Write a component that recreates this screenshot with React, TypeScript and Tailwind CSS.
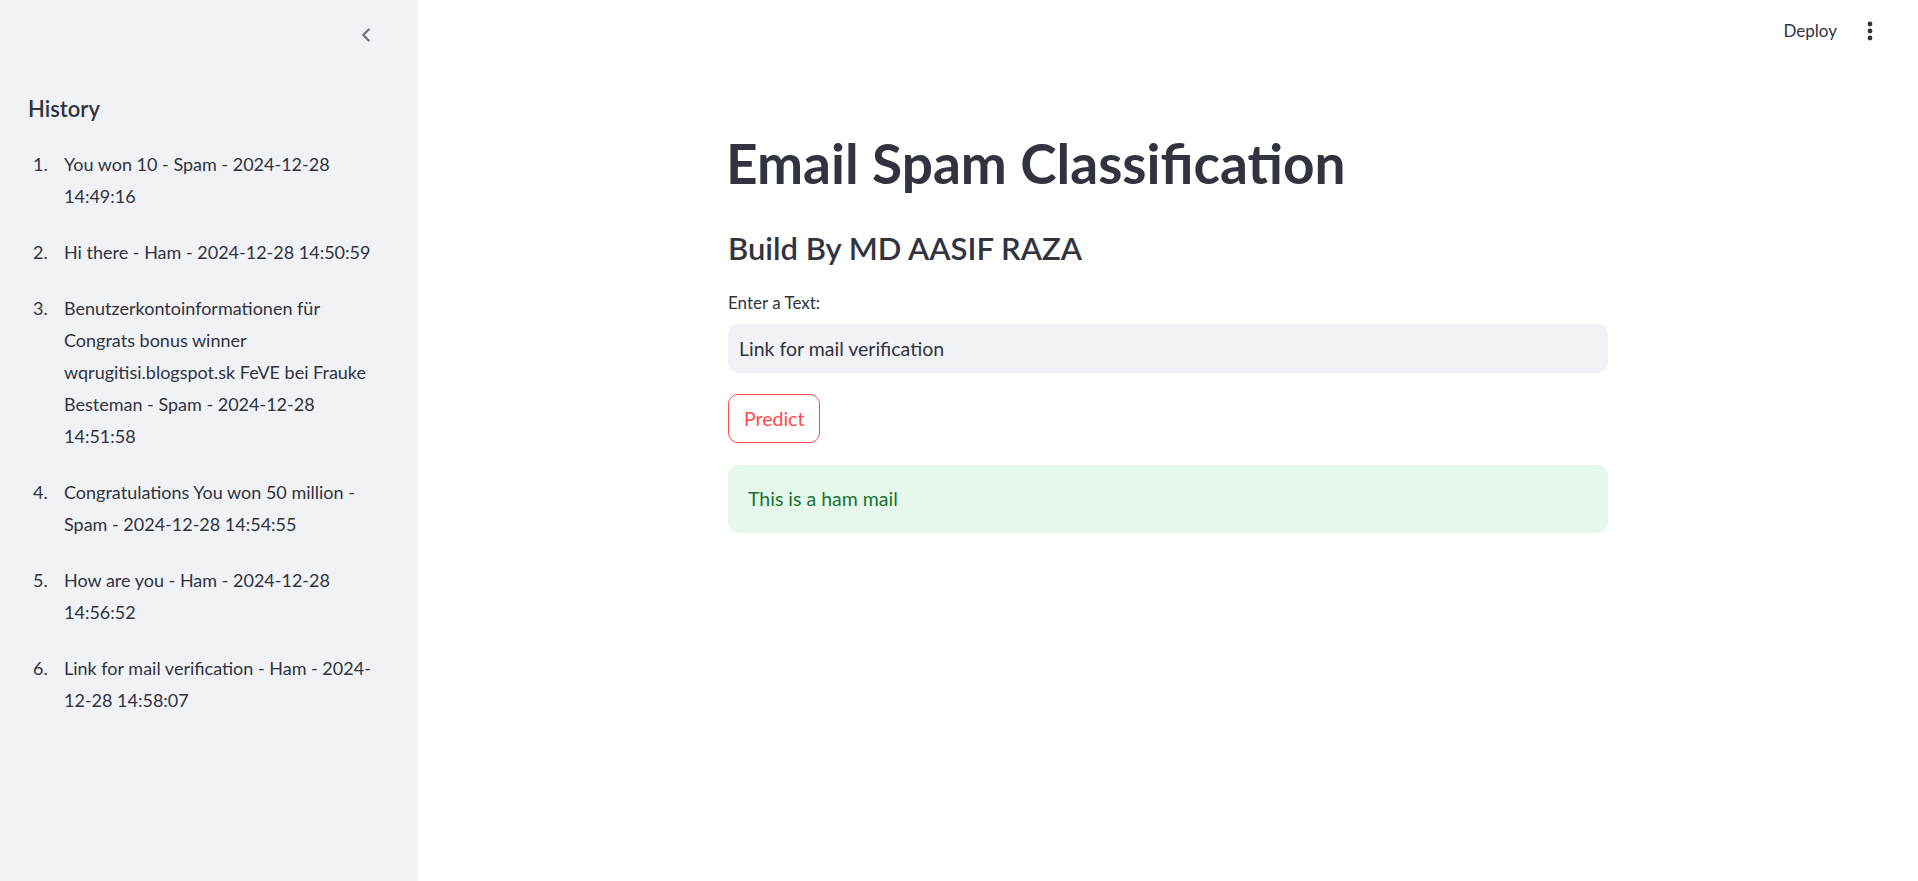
import React from 'react';
import { ChevronLeft } from 'lucide-react';

const history = [
  'You won 10 - Spam - 2024-12-28 14:49:16',
  'Hi there - Ham - 2024-12-28 14:50:59',
  'Benutzerkontoinformationen für Congrats bonus winner wqrugitisi.blogspot.sk FeVE bei Frauke Besteman - Spam - 2024-12-28 14:51:58',
  'Congratulations You won 50 million - Spam - 2024-12-28 14:54:55',
  'How are you - Ham - 2024-12-28 14:56:52',
  'Link for mail verification - Ham - 2024-12-28 14:58:07',
];

const Sidebar: React.FC = () => (
  <aside className="w-[418px] shrink-0 bg-[#f0f2f6] min-h-[881px] pl-[28px] pr-[28px]">
    <div className="flex justify-end h-[70px] items-center pr-[13px]">
      <ChevronLeft className="w-[22px] h-[22px] text-[#6b6f80]" strokeWidth={2.4} />
    </div>
    <h3 className="mt-[26px] text-[22px] leading-[26px] font-semibold text-[#31333f]">History</h3>
    <ol className="mt-[26px] flex flex-col gap-[24px]">
      {history.map((item, i) => (
        <li key={i} className="flex text-[18px] leading-[32px] text-[#31333f]">
          <span className="w-[36px] shrink-0 pl-[5px]">{i + 1}.</span>
          <span className="flex-1">{item}</span>
        </li>
      ))}
    </ol>
  </aside>
);

export default function App() {
  return (
    <div className="flex w-full min-h-[881px] bg-white font-['Lato',sans-serif] text-[#31333f] overflow-hidden">
      <Sidebar />
      <main className="flex-1 relative">
        <div className="absolute top-0 right-0 flex items-center h-[62px] pr-[45px] gap-[30px]">
          <span className="text-[17px] text-[#31333f]">Deploy</span>
          <svg width="6" height="22" viewBox="0 0 6 22" className="text-[#31333f]">
            <circle cx="3" cy="4" r="2.4" fill="currentColor" />
            <circle cx="3" cy="11" r="2.4" fill="currentColor" />
            <circle cx="3" cy="18" r="2.4" fill="currentColor" />
          </svg>
        </div>
        <div className="flex justify-center">
          <div className="w-[880px] pt-[130px] flex flex-col">
            <h1 className="-ml-[2px] text-[55px] leading-[66px] font-bold text-[#31333f]">Email Spam Classification</h1>
            <h3 className="mt-[31px] text-[31px] leading-[42px] font-semibold text-[#31333f]">Build By MD AASIF RAZA</h3>
            <label className="mt-[23px] text-[17px] leading-[22px] text-[#31333f]">Enter a Text:</label>
            <div className="mt-[10px] h-[49px] rounded-[10px] bg-[#f0f2f6] flex items-center px-[11px] text-[19.5px]">
              Link for mail verification
            </div>
            <div className="mt-[21px]">
              <button className="h-[49px] px-[15px] rounded-[10px] border border-[#ff4b4b] text-[#ff4b4b] text-[19.5px] bg-white">
                Predict
              </button>
            </div>
            <div className="mt-[22px] h-[68px] rounded-[10px] bg-[#e6f8ec] flex items-center px-[20px] text-[19.5px] text-[#177233]">
              This is a ham mail
            </div>
          </div>
        </div>
      </main>
    </div>
  );
}
